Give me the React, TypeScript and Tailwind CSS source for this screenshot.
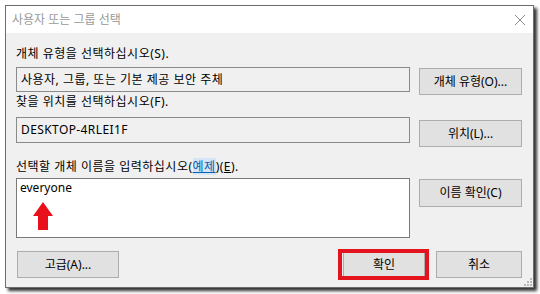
import React from "react"

const font = "font-['Noto_Sans','Noto_Sans_CJK_KR',sans-serif]"

function Btn({ children, className = "" }: { children: React.ReactNode; className?: string }) {
  return (
    <div
      className={`flex items-center justify-center border border-[#adadad] bg-[#e1e1e1] text-[12px] text-black ${className}`}
    >
      {children}
    </div>
  )
}

export default function App() {
  return (
    <div className={`w-[540px] h-[294px] bg-white pl-[5px] pt-[5px] ${font}`}>
      <div className="relative flex h-[283px] w-[529px] flex-col border border-[#6d6d6d] shadow-[3px_3px_3px_rgba(0,0,0,0.8)]">
        {/* title bar */}
        <div className="flex h-[27px] items-center justify-between bg-white pl-[6px] pr-[6px]">
          <span className="text-[12px] leading-[16px] text-[#999999]">사용자 또는 그룹 선택</span>
          <svg width="12" height="12" viewBox="0 0 12 12" className="mr-[1px]">
            <path d="M1 1 L11 11 M11 1 L1 11" stroke="#8a8a8a" strokeWidth="1" />
          </svg>
        </div>

        {/* body */}
        <div className="flex flex-1 flex-col bg-[#f0f0f0] pl-[10px] pr-[11px] text-[12px] leading-[16px] text-black">
          {/* row 1 */}
          <div className="mt-[13px] flex items-start">
            <div className="flex w-[394px] flex-col">
              <span className="mb-[5px] tracking-[0.5px]">개체 유형을 선택하십시오(S).</span>
              <div className="flex h-[25px] items-center border border-[#8a8a8a] bg-[#f0f0f0] pl-[4px] tracking-[0.5px]">
                사용자, 그룹, 또는 기본 제공 보안 주체
              </div>
            </div>
            <Btn className="ml-[9px] mt-[22px] -mb-[3px] h-[27px] w-[103px]">개체 유형(O)...</Btn>
          </div>

          {/* row 2 */}
          <div className="mt-[2px] flex items-start">
            <div className="flex w-[394px] flex-col">
              <span className="mb-[7px] tracking-[0.5px]">찾을 위치를 선택하십시오(F).</span>
              <div className="flex h-[26px] items-center border border-[#8a8a8a] bg-[#f0f0f0] pl-[4px] tracking-[0.4px]">
                DESKTOP-4RLEI1F
              </div>
            </div>
            <Btn className="ml-[9px] mt-[26px] -mb-[4px] h-[27px] w-[103px]">위치(L)...</Btn>
          </div>

          {/* row 3 */}
          <div className="mt-[16px] flex items-start">
            <div className="flex w-[394px] flex-col">
              <span className="mb-[3px] tracking-[0.5px]">
                선택할 개체 이름을 입력하십시오(
                <span className="bg-[#d3e5f6] text-[#0a5fb4] underline">예제</span>
                )(<span className="underline">E</span>).
              </span>
              <div className="relative h-[60px] border border-[#7a7a7a] bg-white pl-[3px] pt-[1px]">
                <span>everyone</span>
                <svg
                  width="20"
                  height="28"
                  viewBox="0 0 20 28"
                  className="absolute left-[16px] top-[23px]"
                >
                  <path d="M10 0 L20 14 L15 14 L15 28 L5 28 L5 14 L0 14 Z" fill="#e8101a" />
                </svg>
              </div>
            </div>
            <Btn className="ml-[9px] mt-[20px] h-[28px] w-[103px]">이름 확인(C)</Btn>
          </div>

          {/* bottom buttons */}
          <div className="mt-[13px] flex items-center pl-[1px]">
            <Btn className="h-[27px] w-[102px]">고급(A)...</Btn>
            <div className="flex-1" />
            <div className="relative">
              <Btn className="h-[27px] w-[82px]">확인</Btn>
              <span className="absolute -bottom-[2px] -left-[5px] -right-[4px] -top-[2px] border-[4px] border-[#e3141d]" />
            </div>
            <Btn className="ml-[11px] h-[27px] w-[86px]">취소</Btn>
          </div>
        </div>

        {/* size grip */}
        <svg width="8" height="8" viewBox="0 0 8 8" className="absolute bottom-[1px] right-[1px]">
          <rect x="6" y="0" width="2" height="2" fill="#b8b8b8" />
          <rect x="3" y="3" width="2" height="2" fill="#b8b8b8" />
          <rect x="6" y="3" width="2" height="2" fill="#b8b8b8" />
          <rect x="0" y="6" width="2" height="2" fill="#b8b8b8" />
          <rect x="3" y="6" width="2" height="2" fill="#b8b8b8" />
          <rect x="6" y="6" width="2" height="2" fill="#b8b8b8" />
        </svg>
      </div>
    </div>
  )
}
